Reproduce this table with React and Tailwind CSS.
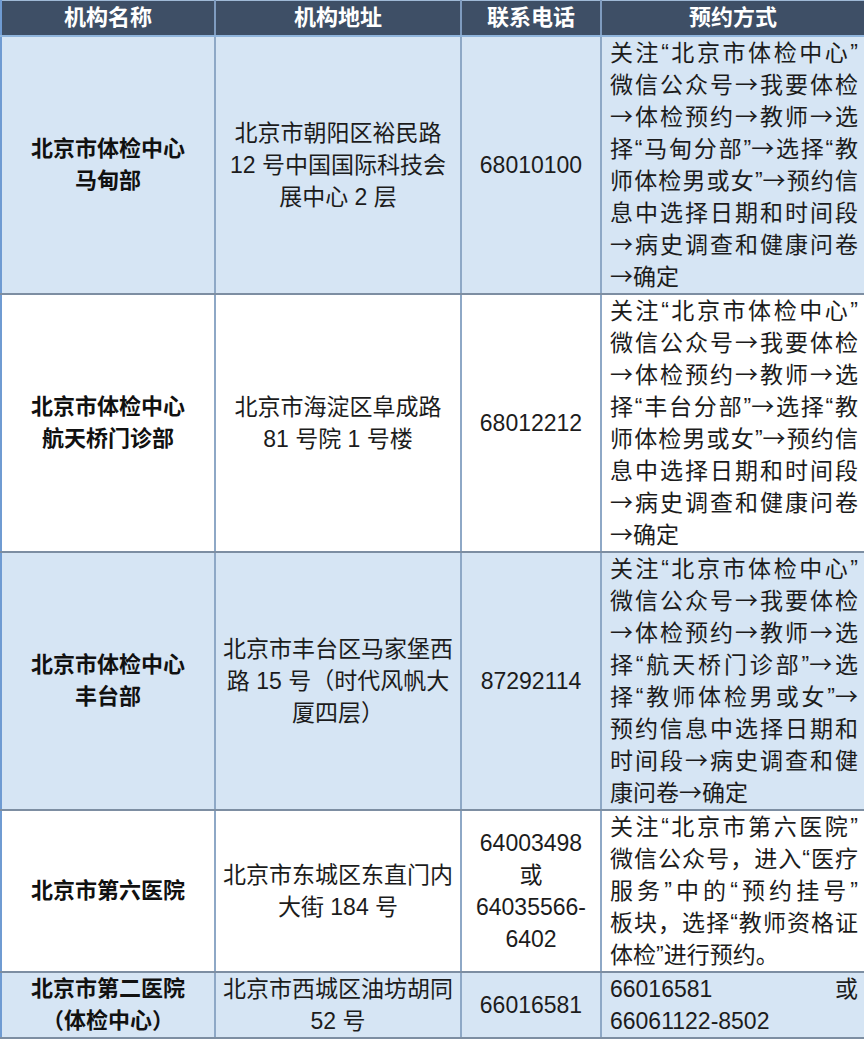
import * as React from 'react';

const FONT = "font-['Liberation_Sans','Noto_Sans_CJK_SC',sans-serif]";

const rows = [
  {
    name: ['北京市体检中心', '马甸部'],
    addr: ['北京市朝阳区裕民路', '12 号中国国际科技会', '展中心 2 层'],
    phone: ['68010100'],
    way: [
      '关注“北京市体检中心”',
      '微信公众号→我要体检',
      '→体检预约→教师→选',
      '择“马甸分部”→选择“教',
      '师体检男或女”→预约信',
      '息中选择日期和时间段',
      '→病史调查和健康问卷',
      '→确定',
    ],
    tint: true,
  },
  {
    name: ['北京市体检中心', '航天桥门诊部'],
    addr: ['北京市海淀区阜成路', '81 号院 1 号楼'],
    phone: ['68012212'],
    way: [
      '关注“北京市体检中心”',
      '微信公众号→我要体检',
      '→体检预约→教师→选',
      '择“丰台分部”→选择“教',
      '师体检男或女”→预约信',
      '息中选择日期和时间段',
      '→病史调查和健康问卷',
      '→确定',
    ],
    tint: false,
  },
  {
    name: ['北京市体检中心', '丰台部'],
    addr: ['北京市丰台区马家堡西', '路 15 号（时代风帆大', '厦四层）'],
    phone: ['87292114'],
    way: [
      '关注“北京市体检中心”',
      '微信公众号→我要体检',
      '→体检预约→教师→选',
      '择“航天桥门诊部”→选',
      '择“教师体检男或女”→',
      '预约信息中选择日期和',
      '时间段→病史调查和健',
      '康问卷→确定',
    ],
    tint: true,
  },
  {
    name: ['北京市第六医院'],
    addr: ['北京市东城区东直门内', '大街 184 号'],
    phone: ['64003498', '或', '64035566-', '6402'],
    way: [
      '关注“北京市第六医院”',
      '微信公众号，进入“医疗',
      '服务”中的“预约挂号”',
      '板块，选择“教师资格证',
      '体检”进行预约。',
    ],
    tint: false,
  },
  {
    name: ['北京市第二医院', '（体检中心）'],
    addr: ['北京市西城区油坊胡同', '52 号'],
    phone: ['66016581'],
    way: ['66016581 或', '66061122-8502'],
    tint: true,
  },
];

// arrows come from the CJK font, they are drawn larger there
function Glyphs({ text }) {
  return text.split(/(→)/).map((part, i) =>
    part === '→' ? (
      <span key={i} className="font-['Noto_Sans_CJK_SC',sans-serif] leading-none">
        {part}
      </span>
    ) : (
      part
    )
  );
}

/**
 * Lines of a cell, one div per line
 */
function Lines({ lines, justify }) {
  return lines.map((line, i) => (
    <div
      key={i}
      className={
        justify && i < lines.length - 1
          ? 'h-[32px] whitespace-nowrap text-justify [text-align-last:justify]'
          : 'h-[32px] whitespace-nowrap'
      }
    >
      <Glyphs text={line} />
    </div>
  ));
}

export default function App() {
  return (
    <div className={`w-[864px] h-[1041px] bg-white ${FONT}`}>
      <table className="w-[864px] table-fixed border-collapse">
        <colgroup>
          <col className="w-[214px]" />
          <col className="w-[246px]" />
          <col className="w-[140px]" />
          <col className="w-[264px]" />
        </colgroup>
        <thead>
          <tr className="h-[35px] bg-[#3e4f66] text-white text-[22px] font-bold leading-[32px]">
            {['机构名称', '机构地址', '联系电话', '预约方式'].map((h, i) => (
              <th
                key={h}
                className={`text-center border-b-2 border-b-[#8fb4dc] border-t border-t-[#9fb9d6] ${
                  i === 0 ? 'border-l-2 border-l-[#6f9bd2]' : ''
                } border-r-2 border-r-[#7f9cc0]`}
              >
                {h}
              </th>
            ))}
          </tr>
        </thead>
        <tbody>
          {rows.map((r, idx) => (
            <tr
              key={idx}
              className={`${r.tint ? 'bg-[#d6e5f4]' : 'bg-white'} text-[23px] leading-[32px] text-[#1c1c1c]`}
            >
              <td className="border-l-2 border-l-[#6f9bd2] border-r-2 border-r-[#8ea8c6] border-b-2 border-b-[#7d8ea2] text-center align-middle font-bold text-[22px] text-[#111]">
                <Lines lines={r.name} />
              </td>
              <td className="border-r-2 border-r-[#8ea8c6] border-b-2 border-b-[#7d8ea2] text-center align-middle px-1">
                <Lines lines={r.addr} />
              </td>
              <td className="border-r-2 border-r-[#8ea8c6] border-b-2 border-b-[#7d8ea2] text-center align-middle">
                <Lines lines={r.phone} />
              </td>
              <td className="border-r-2 border-r-[#8ea8c6] border-b-2 border-b-[#7d8ea2] align-middle pl-2 pr-[6px]">
                <Lines lines={r.way} justify />
              </td>
            </tr>
          ))}
        </tbody>
      </table>
    </div>
  );
}
